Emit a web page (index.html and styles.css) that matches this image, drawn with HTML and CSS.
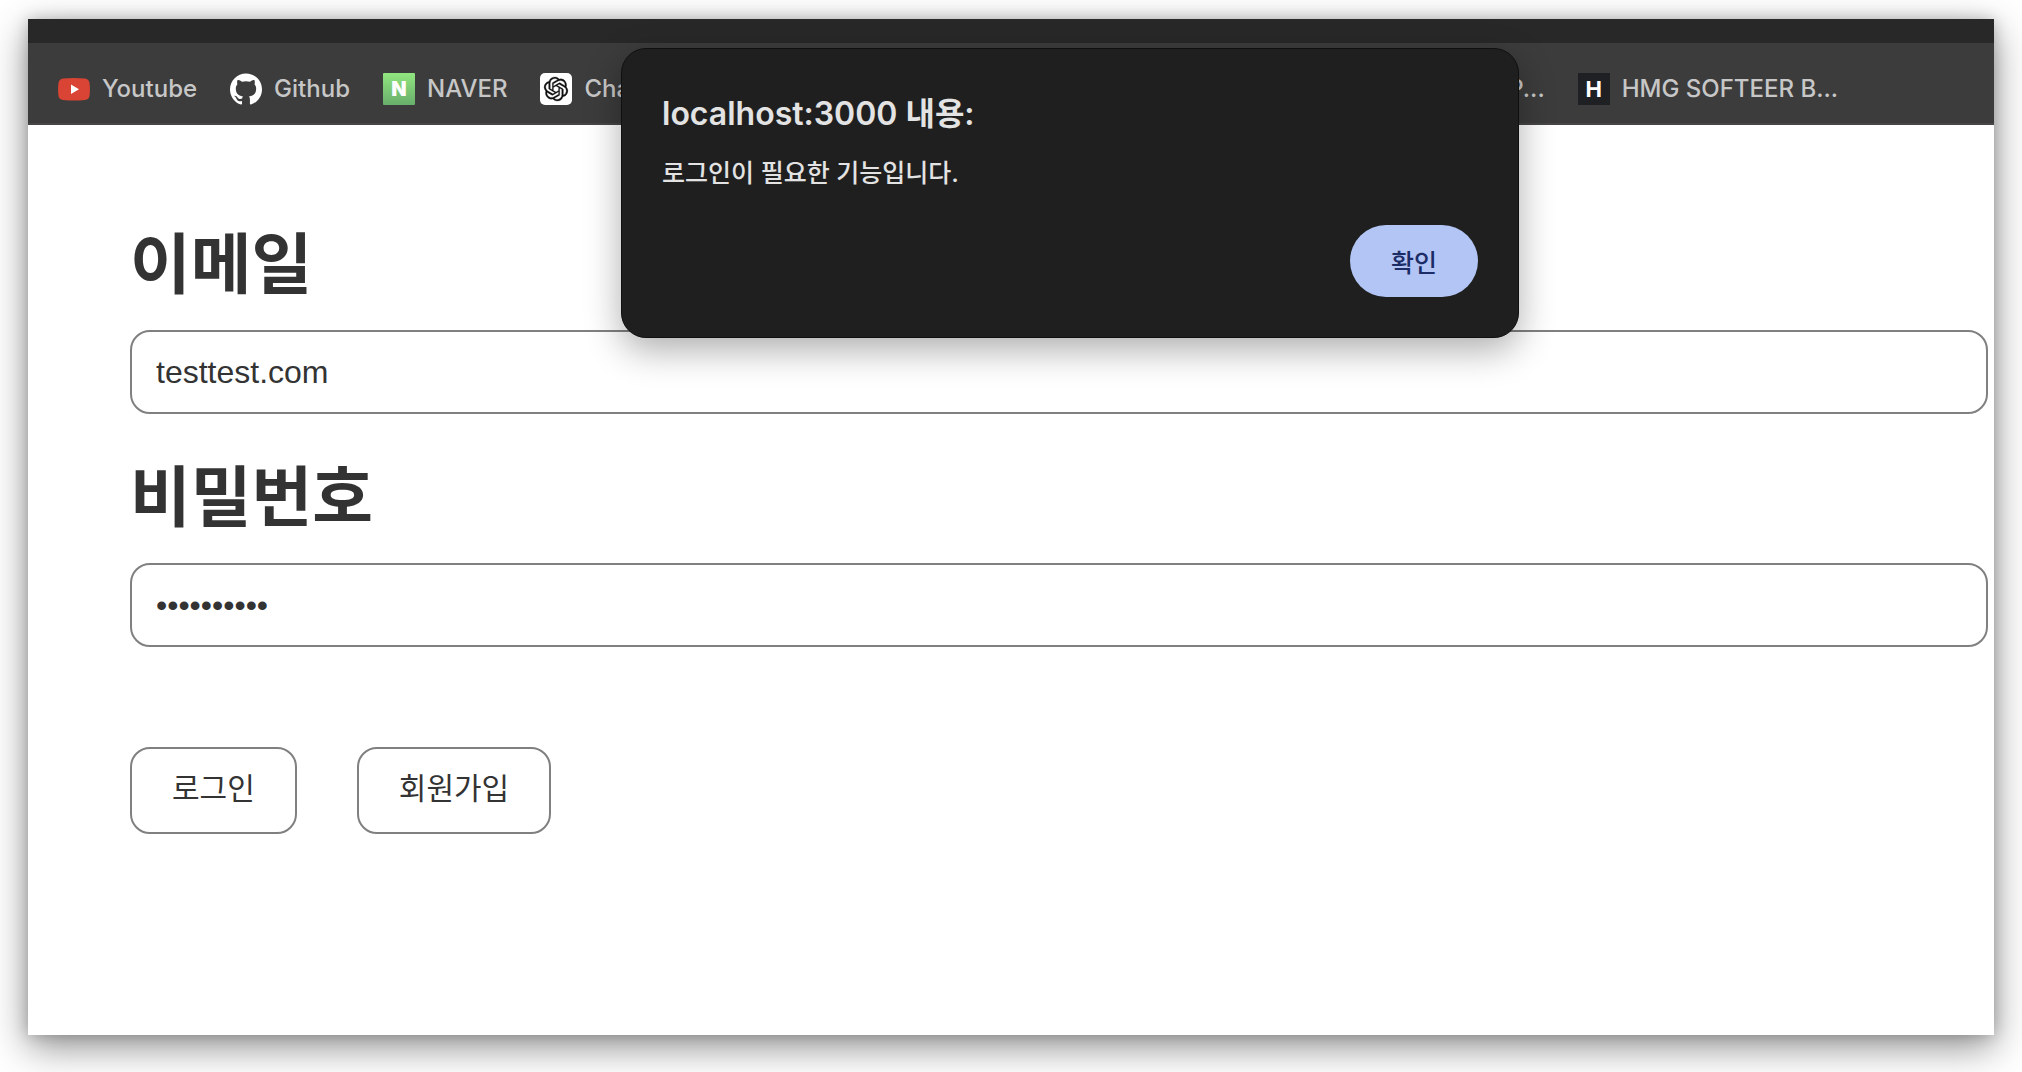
FILE: index.html
```html
<!DOCTYPE html>
<html lang="ko">
<head>
<meta charset="utf-8">
<title>로그인</title>
<link rel="stylesheet" href="styles.css">
</head>
<body>
<div class="window">
  <div class="tabstrip"></div>
  <nav class="bookmarks">
    <a class="bookmark" href="#">
      <svg class="icon" viewBox="0 0 32 32"><path fill="#d94434" d="M5 5.500Q16 4.500 27 5.500 31 6 31.500 10 32.400 16 31.500 23 31 26.500 27 27 16 28 5 27 1 26.500.5 23-.4 16 .5 10 1 6 5 5.500z"/><path fill="#fff" d="M13 11.500v9.400l8-4.700z"/></svg>
      <span>Youtube</span>
    </a>
    <a class="bookmark" href="#">
      <svg class="icon" viewBox="0 0 24 24"><path fill="#fff" d="M12 .297c-6.630 0-12 5.373-12 12 0 5.303 3.438 9.800 8.205 11.385.6.113.82-.258.82-.577 0-.285-.01-1.040-.015-2.040-3.338.724-4.042-1.610-4.042-1.610C4.422 18.070 3.633 17.700 3.633 17.700c-1.087-.744.084-.729.084-.729 1.205.084 1.838 1.236 1.838 1.236 1.070 1.835 2.809 1.305 3.495.998.108-.776.417-1.305.76-1.605-2.665-.3-5.466-1.332-5.466-5.930 0-1.310.465-2.380 1.235-3.220-.135-.303-.54-1.523.105-3.176 0 0 1.005-.322 3.300 1.230.96-.267 1.980-.399 3-.405 1.020.006 2.040.138 3 .405 2.280-1.552 3.285-1.230 3.285-1.230.645 1.653.24 2.873.12 3.176.765.84 1.230 1.910 1.230 3.220 0 4.610-2.805 5.625-5.475 5.920.42.36.81 1.096.81 2.220 0 1.606-.015 2.896-.015 3.286 0 .315.21.69.825.57C20.565 22.092 24 17.592 24 12.297c0-6.627-5.373-12-12-12"/></svg>
      <span>Github</span>
    </a>
    <a class="bookmark" href="#">
      <span class="icon icon-naver">N</span>
      <span>NAVER</span>
    </a>
    <a class="bookmark" href="#">
      <svg class="icon icon-chat" viewBox="-4 -4 32 32"><path fill="#111" stroke="#111" stroke-width=".3" d="M22.2819 9.8211a5.9847 5.9847 0 0 0-.5157-4.9108 6.0462 6.0462 0 0 0-6.5098-2.9A6.0651 6.0651 0 0 0 4.9807 4.1818a5.9847 5.9847 0 0 0-3.9977 2.9 6.0462 6.0462 0 0 0 .7427 7.0966 5.98 5.98 0 0 0 .511 4.9107 6.051 6.051 0 0 0 6.5146 2.9001A5.9847 5.9847 0 0 0 13.2599 24a6.0557 6.0557 0 0 0 5.7718-4.2058 5.9894 5.9894 0 0 0 3.9977-2.9001 6.0557 6.0557 0 0 0-.7475-7.0729zm-9.022 12.6081a4.4755 4.4755 0 0 1-2.8764-1.0408l.1419-.0804 4.7783-2.7582a.7948.7948 0 0 0 .3927-.6813v-6.7369l2.02 1.1686a.071.071 0 0 1 .038.0615v5.5826a4.504 4.504 0 0 1-4.4945 4.4849zm-9.6607-4.1254a4.4708 4.4708 0 0 1-.5346-3.0137l.142.0852 4.783 2.7582a.7712.7712 0 0 0 .7806 0l5.8428-3.3685v2.3324a.0804.0804 0 0 1-.0332.0615L9.74 19.9502a4.4992 4.4992 0 0 1-6.1408-1.6464zM2.3408 7.8956a4.485 4.485 0 0 1 2.3655-1.9728V11.6a.7664.7664 0 0 0 .3879.6765l5.8144 3.3543-2.0201 1.1685a.0757.0757 0 0 1-.071 0l-4.8303-2.7865A4.504 4.504 0 0 1 2.3408 7.872zm16.5963 3.8558L13.1038 8.364 15.1192 7.2a.0757.0757 0 0 1 .071 0l4.8303 2.7913a4.4944 4.4944 0 0 1-.6765 8.1042v-5.6772a.79.79 0 0 0-.407-.667zm2.0107-3.0231l-.142-.0852-4.7735-2.7818a.7759.7759 0 0 0-.7854 0L9.409 9.2297V6.8974a.0662.0662 0 0 1 .0284-.0615l4.8303-2.7866a4.4992 4.4992 0 0 1 6.6802 4.66zM8.3065 12.863l-2.02-1.1638a.0804.0804 0 0 1-.038-.0567V6.0742a4.4992 4.4992 0 0 1 7.3757-3.4537l-.142.0805L8.704 5.459a.7948.7948 0 0 0-.3927.6813zm1.0976-2.3654l2.602-1.4998 2.6069 1.4998v2.9994l-2.5974 1.4997-2.6067-1.4997Z"/></svg>
      <span>Chat</span>
    </a>
    <a class="bookmark bookmark-far" href="#"><span>P...</span></a>
    <a class="bookmark" href="#">
      <span class="icon icon-softeer">H</span>
      <span>HMG SOFTEER B...</span>
    </a>
  </nav>

  <form class="login">
    <label class="field-label" for="email">이메일</label>
    <input class="field" id="email" type="text" value="testtest.com">
    <label class="field-label" for="password">비밀번호</label>
    <input class="field" id="password" type="password" value="testtest12">
    <div class="actions">
      <button class="action" type="button">로그인</button>
      <button class="action" type="button">회원가입</button>
    </div>
  </form>

  <div class="alert" role="alertdialog" aria-labelledby="alert-title" aria-describedby="alert-text">
    <h1 class="alert-title" id="alert-title">localhost:3000 내용:</h1>
    <p class="alert-text" id="alert-text">로그인이 필요한 기능입니다.</p>
    <button class="alert-ok" type="button">확인</button>
  </div>
</div>
</body>
</html>
```
FILE: styles.css
```css
* {
  box-sizing: border-box;
}

body {
  margin: 0;
  padding: 19px 28px 37px;
  min-height: 100vh;
  display: flex;
  background: #fff;
  color: #333;
  font-family: Inter, "Noto Sans CJK KR", sans-serif;
}

.window {
  position: relative;
  flex: 1;
  min-width: 0;
  background: #fff;
  box-shadow: 0 12px 36px rgba(0, 0, 0, 0.44), 0 0 14px rgba(0, 0, 0, 0.2);
}

.tabstrip {
  height: 24px;
  background: #282828;
}

.bookmarks {
  display: flex;
  align-items: center;
  gap: 33px;
  height: 82px;
  padding: 12px 156px 0 30px;
  background: #3c3c3c;
  border-bottom: 2px solid #474546;
  white-space: nowrap;
  overflow: hidden;
}

.bookmark {
  display: flex;
  align-items: center;
  gap: 12px;
  color: #c7c7c7;
  font-size: 24px;
  font-weight: 500;
  line-height: 32px;
  text-decoration: none;
}

.bookmark-far {
  margin-left: auto;
}

.icon {
  flex: none;
  width: 32px;
  height: 32px;
  color: #fff;
  text-align: center;
}

.icon-naver {
  border-radius: 1px;
  background: linear-gradient(#91e67f, #68ae6c);
  font-size: 20px;
  font-weight: 900;
}

.icon-chat {
  border-radius: 5px;
  background: #fff;
}

.icon-softeer {
  background: #1f2024;
  font-size: 22px;
  font-weight: 700;
}

.login {
  display: flex;
  flex-direction: column;
  padding: 91px 6px 40px 102px;
}

.field-label {
  margin-bottom: 18px;
  font-size: 66px;
  font-weight: 700;
  line-height: 96px;
}

.field {
  width: 100%;
  height: 84px;
  margin-bottom: 35px;
  padding: 0 24px;
  border: 2px solid #808080;
  border-radius: 20px;
  background: #fff;
  color: #333;
  font-family: "Liberation Sans", sans-serif;
  font-size: 32px;
}

.actions {
  display: flex;
  gap: 60px;
  margin-top: 65px;
}

.action {
  padding: 16px 40px 25px;
  border: 2px solid #808080;
  border-radius: 20px;
  background: #fff;
  color: #333;
  font-family: "Noto Sans CJK KR", sans-serif;
  font-size: 30px;
  line-height: 42px;
}

.alert {
  position: absolute;
  top: 29px;
  left: 593px;
  display: flex;
  flex-direction: column;
  width: 898px;
  padding: 43px 40px 40px;
  border: 1px solid #101010;
  border-radius: 25px;
  background: #1f1f1f;
  color: #e3e3e3;
  box-shadow: 0 12px 36px rgba(0, 0, 0, 0.32);
}

.alert-title {
  margin: 0 0 20px;
  font-size: 32px;
  font-weight: 600;
  line-height: 44px;
}

.alert-text {
  margin: 0 0 35px;
  font-size: 25px;
  font-weight: 500;
  line-height: 34px;
}

.alert-ok {
  align-self: flex-end;
  width: 128px;
  height: 72px;
  border: 0;
  border-radius: 36px;
  background: #b2c5f4;
  color: #1b2c66;
  font-family: "Noto Sans CJK KR", sans-serif;
  font-size: 25px;
  font-weight: 500;
}
```
